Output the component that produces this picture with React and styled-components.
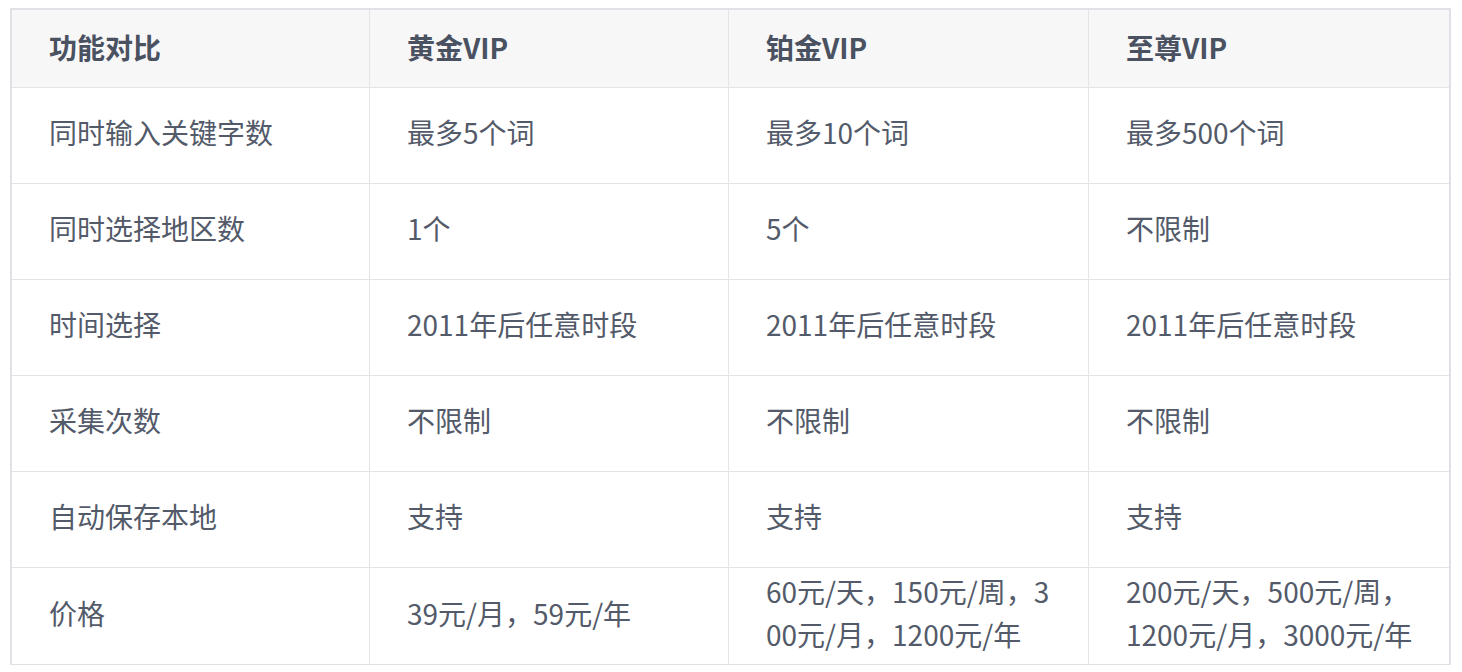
import React from "react";
import styled, { createGlobalStyle } from "styled-components";

const GlobalStyle = createGlobalStyle`
  html, body {
    margin: 0;
    padding: 0;
    background: #fff;
  }
  body {
    font-family: "Noto Sans CJK SC", "Noto Sans", sans-serif;
  }
`;

const headers = ["功能对比", "黄金VIP", "铂金VIP", "至尊VIP"];

const rows = [
  ["同时输入关键字数", "最多5个词", "最多10个词", "最多500个词"],
  ["同时选择地区数", "1个", "5个", "不限制"],
  ["时间选择", "2011年后任意时段", "2011年后任意时段", "2011年后任意时段"],
  ["采集次数", "不限制", "不限制", "不限制"],
  ["自动保存本地", "支持", "支持", "支持"],
  [
    "价格",
    ["39元/月，59元/年"],
    ["60元/天，150元/周，3", "00元/月，1200元/年"],
    ["200元/天，500元/周，", "1200元/月，3000元/年"],
  ],
];

function Compare() {
  const lastRow = rows.length - 1;
  return (
    <Page>
      <GlobalStyle />
      <Grid>
        {headers.map((h, j) => (
          <HeadCell key={h} last={j === 3}>{h}</HeadCell>
        ))}
        {rows.map((row, i) =>
          row.map((cell, j) => (
            <Cell key={i + "-" + j} last={j === 3} bottom={i === lastRow}>
              {Array.isArray(cell) ? (
                <Lines>
                  {cell.map((line, k) => <span key={k}>{line}</span>)}
                </Lines>
              ) : (
                cell
              )}
            </Cell>
          ))
        )}
      </Grid>
    </Page>
  );
}

const Page = styled.div`
  padding: 8px 11px 0 10px;
`;

const Grid = styled.div`
  display: grid;
  width: 1437px;
  grid-template-columns: 358px 359px 360px 360px;
  grid-template-rows: 78px repeat(6, 96px);
  border: 2px solid #dfe1e6;
  border-bottom-width: 1px;
  color: #535a69;
  font-size: 28px;
`;

const HeadCell = styled.div`
  display: flex;
  align-items: center;
  padding: 0 37px 4px;
  font-weight: 600;
  color: #4a5161;
  background: #f7f7f8;
  border-bottom: 1px solid #e3e4e8;
  border-right: ${(p) => (p.last ? "none" : "1px solid #e3e4e8")};
`;

const Cell = styled.div`
  display: flex;
  align-items: center;
  padding: 0 37px 6px;
  line-height: 43px;
  white-space: nowrap;
  border-bottom: ${(p) => (p.bottom ? "none" : "1px solid #e3e4e8")};
  border-right: ${(p) => (p.last ? "none" : "1px solid #e3e4e8")};
`;

const Lines = styled.div`
  display: flex;
  flex-direction: column;
`;

export default function App() {
  return <Compare />;
}
